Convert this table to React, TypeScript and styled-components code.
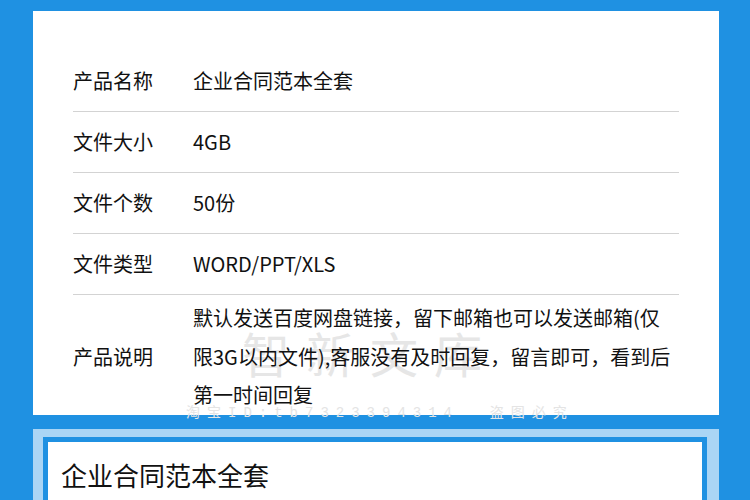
import React from "react";
import styled, { createGlobalStyle } from "styled-components";

const Global = createGlobalStyle`
  html, body { margin: 0; padding: 0; background: #1f91e2; }
  body { font-family: "Noto Sans CJK SC", "Noto Sans", sans-serif; color: #111; }
`;

const Page = styled.div`
  width: 750px;
  box-sizing: border-box;
  padding: 11px 31px 0 33px;
  background: #1f91e2;
`;

const InfoPanel = styled.section`
  position: relative;
  background: #fff;
  height: 404px;
  box-sizing: border-box;
  padding: 40px 40px 0 40px;
`;

const Table = styled.div`
  position: relative;
  z-index: 1;
  display: flex;
  flex-direction: column;
`;

const Row = styled.div<{ $tall?: boolean }>`
  display: grid;
  grid-template-columns: 120px 1fr;
  align-items: center;
  height: ${(p) => (p.$tall ? "auto" : "60px")};
  padding-top: ${(p) => (p.$tall ? "4px" : "0")};
  border-bottom: ${(p) => (p.$tall ? "none" : "1px solid #d3d3d3")};
  font-size: 20px;
`;

const Label = styled.div`
  line-height: 24px;
  color: #111;
`;

const Value = styled.div<{ $multi?: boolean }>`
  line-height: ${(p) => (p.$multi ? "38.5px" : "24px")};
  max-width: 480px;
  color: #111;
`;

const BigMark = styled.div`
  position: absolute;
  left: 209px;
  top: 311px;
  font-size: 48px;
  line-height: 60px;
  letter-spacing: 16px;
  color: #e6e6e6;
  z-index: 0;
  white-space: nowrap;
  pointer-events: none;
`;

const SmallMark = styled.div`
  position: absolute;
  left: 153px;
  top: 394px;
  font-family: "Liberation Mono", "Noto Sans CJK SC", monospace;
  font-size: 14px;
  line-height: 16px;
  letter-spacing: 7px;
  color: #e4e4e4;
  white-space: pre;
  z-index: 0;
  pointer-events: none;
`;

const TitleFrame = styled.section`
  margin-top: 14px;
  background: #aad5f5;
  padding: 8px 12px 0 10px;
`;

const TitleBox = styled.div`
  background: #fff;
  border: 5px solid #1f91e2;
  border-bottom: none;
  padding: 16px 13px 40px;
`;

const Title = styled.h2`
  margin: 0;
  font-size: 26px;
  font-weight: normal;
  line-height: 34px;
  color: #111;
`;

const rows = [
  ["产品名称", "企业合同范本全套"],
  ["文件大小", "4GB"],
  ["文件个数", "50份"],
  ["文件类型", "WORD/PPT/XLS"],
];

export default function App() {
  return (
    <Page>
      <Global />
      <InfoPanel>
        <BigMark>智新文库</BigMark>
        <Table>
          {rows.map(([k, v]) => (
            <Row key={k}>
              <Label>{k}</Label>
              <Value>{v}</Value>
            </Row>
          ))}
          <Row $tall>
            <Label>产品说明</Label>
            <Value $multi>
              默认发送百度网盘链接，留下邮箱也可以发送邮箱(仅限3G以内文件),客服没有及时回复，留言即可，看到后第一时间回复
            </Value>
          </Row>
        </Table>
        <SmallMark>{"淘宝ID:tb7323394314  盗图必究"}</SmallMark>
      </InfoPanel>
      <TitleFrame>
        <TitleBox>
          <Title>企业合同范本全套</Title>
        </TitleBox>
      </TitleFrame>
    </Page>
  );
}
